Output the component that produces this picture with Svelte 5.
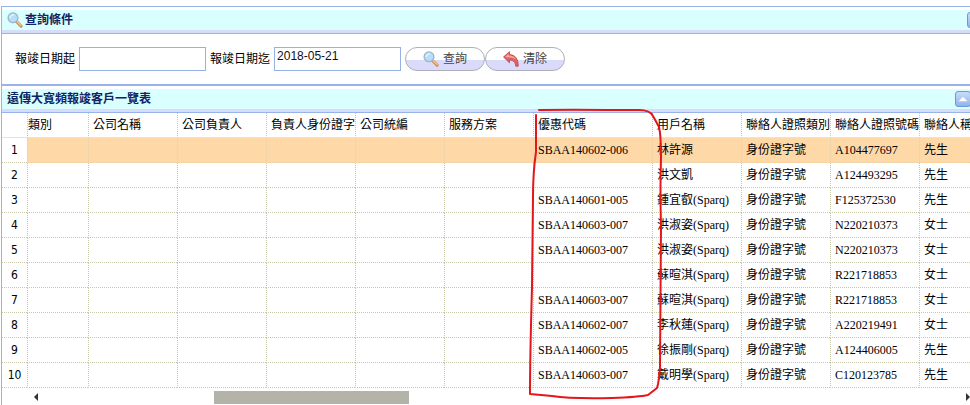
<script>
  const columns = ['類別', '公司名稱', '公司負責人', '負責人身份證字', '公司統編', '服務方案', '優惠代碼', '用戶名稱', '聯絡人證照類別', '聯絡人證照號碼', '聯絡人稱'];
  const customers = [
    ['SBAA140602-006', '林許源', 'A104477697', '先生'],
    ['', '洪文凱', 'A124493295', '先生'],
    ['SBAA140601-005', '鍾宜叡(Sparq)', 'F125372530', '先生'],
    ['SBAA140603-007', '洪淑姿(Sparq)', 'N220210373', '女士'],
    ['SBAA140603-007', '洪淑姿(Sparq)', 'N220210373', '女士'],
    ['', '蘇暄淇(Sparq)', 'R221718853', '女士'],
    ['SBAA140603-007', '蘇暄淇(Sparq)', 'R221718853', '女士'],
    ['SBAA140602-007', '李秋蓮(Sparq)', 'A220219491', '女士'],
    ['SBAA140602-005', '徐振剛(Sparq)', 'A124406005', '先生'],
    ['SBAA140603-007', '戴明學(Sparq)', 'C120123785', '先生']
  ];
  const rows = customers.map(([code, name, id, title]) => ['', '', '', '', '', '', code, name, '身份證字號', id, title]);

  let dateFrom = $state('');
  let dateTo = $state('2018-05-21');
  let selected = $state(0);

  function clear() {
    dateFrom = '';
    dateTo = '';
  }
</script>

{#snippet magnifier()}
  <svg class="icon" viewBox="0 0 16 16" aria-hidden="true">
    <path d="M9.5 9.5l4.6 4.6" stroke="#c98a55" stroke-width="3" stroke-linecap="round" />
    <path d="M10 9.5l4 4" stroke="#f9c083" stroke-width="1.6" stroke-linecap="round" />
    <circle cx="6" cy="5.8" r="4.9" fill="#b5def8" stroke="#9fb3c8" stroke-width="1.3" />
    <path d="M3.2 6a3.2 3.2 0 0 1 4-3" fill="none" stroke="#e2f5ff" stroke-width="1.4" />
  </svg>
{/snippet}

{#snippet collapse()}
  <button class="collapse" type="button" aria-label="收合">
    <svg viewBox="0 0 16 16" aria-hidden="true"><path d="M3 10.5L8 5.5l5 5z" fill="#fff" /></svg>
  </button>
{/snippet}

<main>
  <section class="panel">
    <header>
      {@render magnifier()}
      <h2>查詢條件</h2>
      <span class="far">{@render collapse()}</span>
    </header>
    <form onsubmit={(e) => e.preventDefault()}>
      <label for="from">報竣日期起</label>
      <input id="from" type="text" bind:value={dateFrom} />
      <label for="to">報竣日期迄</label>
      <input id="to" type="text" bind:value={dateTo} />
      <div class="actions">
        <button class="pill" type="submit">{@render magnifier()}查詢</button>
        <button class="pill" type="button" onclick={clear}>
          <svg class="icon" viewBox="0 0 16 16" aria-hidden="true">
            <path d="M.5 6L6.5.7v2.9c5.4.1 9 4.4 8.7 11.6h-2.4c-.4-4.2-2.4-6-6.3-6.1v2.7z" fill="#e4605f" stroke="#b64349" stroke-width=".8" />
            <path d="M2.1 6l3.6-3.2v1.8c3.5 0 6 1.3 7.3 4-2-1.6-4.2-2.2-7.2-2.2" fill="#f8aaa2" />
          </svg>清除
        </button>
      </div>
    </form>
  </section>

  <section class="panel list">
    <header>
      <h2>遠傳大寬頻報竣客戶一覽表</h2>
      <span>{@render collapse()}</span>
    </header>
    <div class="viewport">
      <table>
        <colgroup>
          <col class="number" /><col class="first" /><col span="5" class="regular" /><col class="code" /><col span="4" class="regular" />
        </colgroup>
        <thead>
          <tr>
            <td></td>
            {#each columns as column}<th scope="col">{column}</th>{/each}
          </tr>
        </thead>
        <tbody>
          {#each rows as row, i}
            <tr class:selected={selected === i} onclick={() => (selected = i)}>
              <th scope="row">{i + 1}</th>
              {#each row as value}<td>{value}</td>{/each}
            </tr>
          {/each}
        </tbody>
      </table>
      <svg class="mark" viewBox="0 0 136 292" fill="none" stroke="#e2161b" stroke-width="2" stroke-linecap="round" stroke-linejoin="round" aria-hidden="true">
        <path d="M12 3C45 2.5 80 3 112 3Q123 3 126 9L132 20Q134 28 134 50Q133 80 134 120L133 260Q132 275 130 281L121 288Q112 290 85 291Q45 292 25 289L3 287Q3 250 5 180L6 90Q6 65 9 45L9 8" />
      </svg>
    </div>
    <div class="scrollbar" aria-hidden="true">
      <span class="arrow left"></span>
      <span class="track"><span class="thumb"></span></span>
      <span class="arrow right"></span>
    </div>
  </section>
</main>

<style>
  :global(body) {
    background: #fff;
  }

  main {
    padding: 6px 0 0 1px;
    overflow: hidden;
    color: #000;
    font: 12px/16px "Liberation Serif", "Noto Sans CJK TC", serif;
  }

  .panel {
    border: 1px solid #99b3ea;
    border-right: 0;
  }

  .list {
    border-top-width: 2px;
    border-bottom: 0;
  }

  .panel + .panel {
    margin-top: -1px;
  }

  header {
    display: flex;
    align-items: center;
    gap: 2px;
    height: 20px;
    padding: 0 0 3px 5px;
    border-top: 3px solid #fff;
    border-bottom: 1px solid #99b3ea;
    background: #d9ffff;
    box-shadow: inset 0 -3px #d7dcfb;
  }

  header span {
    display: flex;
    margin: 0 -1px 0 auto;
  }

  header .far {
    margin-right: -13px;
  }

  h2 {
    margin: 0;
    color: #102463;
    font: bold 12px/16px "Liberation Sans", "Noto Sans CJK TC", sans-serif;
  }

  .icon {
    width: 16px;
    height: 16px;
    flex: none;
  }

  .collapse {
    width: 16px;
    height: 16px;
    padding: 0;
    border: 1px solid #7095d8;
    border-radius: 3px;
    background: linear-gradient(#c9ddfa, #91b3ed);
  }

  .collapse svg {
    display: block;
    width: 14px;
    height: 14px;
  }

  form {
    display: flex;
    align-items: center;
    gap: 4px;
    height: 50px;
    padding-left: 13px;
  }

  label {
    flex: none;
  }

  input {
    box-sizing: border-box;
    width: 127px;
    height: 24px;
    padding: 0 2px 6px;
    border: 1px solid #95b2e7;
    border-radius: 0;
    background: #fff;
    color: #111;
    font: 12px/16px "Liberation Sans", "Noto Sans CJK TC", sans-serif;
  }

  .actions {
    display: flex;
  }

  .pill {
    display: flex;
    align-items: center;
    justify-content: center;
    gap: 4px;
    width: 80px;
    height: 24px;
    padding: 0;
    border: 1px solid #b0aeb8;
    border-radius: 12px;
    background: linear-gradient(#fff 54%, #dadafa 54%);
    color: #444;
    font: 12px/16px "Liberation Sans", "Noto Sans CJK TC", sans-serif;
  }

  .viewport {
    position: relative;
  }

  table {
    width: 1006px;
    table-layout: fixed;
    border-collapse: separate;
    border-spacing: 0;
  }

  .number {
    width: 25px;
  }

  .first {
    width: 61px;
  }

  .regular {
    width: 89px;
  }

  .code {
    width: 119px;
  }

  th,
  td {
    box-sizing: border-box;
    height: 25px;
    padding: 0 0 0 4px;
    overflow: hidden;
    border-bottom: 1px dotted #c9c9a9;
    border-left: 1px dotted #c9c9a9;
    font-weight: normal;
    text-align: left;
    white-space: nowrap;
  }

  thead th,
  thead td {
    border-bottom: 1px solid #e3e3e3;
  }

  tr > :first-child {
    padding: 0;
    border-left: 0;
    text-align: center;
  }

  tr > :nth-child(2) {
    padding: 0;
  }

  tbody th {
    font-family: "DejaVu Sans Condensed", "DejaVu Sans", sans-serif;
  }

  .selected td {
    border-color: #ead0a4;
    background: #ffd8a8;
  }

  .mark {
    position: absolute;
    top: -6px;
    left: 525px;
    width: 136px;
    height: 292px;
    overflow: visible;
    pointer-events: none;
  }

  .scrollbar {
    display: flex;
    align-items: center;
    height: 17px;
    padding-left: 32px;
  }

  .track {
    display: flex;
    flex: 1;
    padding: 3px 0 1px;
  }

  .thumb {
    width: 21%;
    height: 13px;
    margin-left: 19%;
    background: #b3b3a7;
  }

  .arrow {
    border: 4px solid transparent;
  }

  .left {
    border-right-color: #333;
    border-left: 0;
  }

  .right {
    border-left-color: #333;
    border-right: 0;
  }
</style>
